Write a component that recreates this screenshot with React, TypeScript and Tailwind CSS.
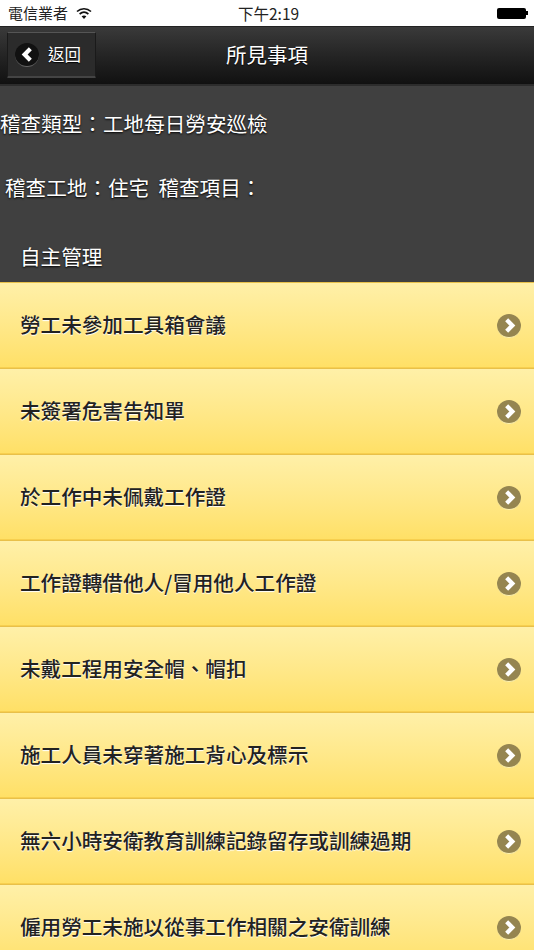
const font = { fontFamily: '"Noto Sans CJK TC", "Liberation Sans", sans-serif' };

const items = [
  "勞工未參加工具箱會議",
  "未簽署危害告知單",
  "於工作中未佩戴工作證",
  "工作證轉借他人/冒用他人工作證",
  "未戴工程用安全帽、帽扣",
  "施工人員未穿著施工背心及標示",
  "無六小時安衛教育訓練記錄留存或訓練過期",
  "僱用勞工未施以從事工作相關之安衛訓練",
];

function Chevron({ dir, size }: { dir: "left" | "right"; size: number }) {
  return (
    <svg width={size} height={size} viewBox="0 0 24 24" fill="none">
      <path
        d={dir === "left" ? "M16 4l-8 8 8 8" : "M8 4l8 8-8 8"}
        stroke="white"
        strokeWidth="6"
        strokeLinejoin="miter"
      />
    </svg>
  );
}

export default function App() {
  return (
    <div className="w-[534px] h-[950px] overflow-hidden flex flex-col bg-[#404040]" style={font}>
      <div className="h-[26px] shrink-0 bg-white flex items-center justify-between relative pl-2 pr-[6px] text-[15px] text-[#222]">
        <div className="flex items-center gap-[8px]">
          <span>電信業者</span>
          <svg width="16" height="12" viewBox="0 0 16 12" fill="none">
            <path d="M1 4.5C5 .8 11 .8 15 4.5" stroke="#111" strokeWidth="1.7" />
            <path d="M3.6 7C6.2 4.8 9.8 4.8 12.4 7" stroke="#111" strokeWidth="1.7" />
            <path d="M8 12l-2.4-2.7C7 8.2 9 8.2 10.4 9.3z" fill="#111" />
          </svg>
        </div>
        <span className="absolute left-[238px] top-0 leading-[26px] text-[15.5px]">下午2:19</span>
        <div className="flex items-center">
          <div className="w-[29px] h-[11px] bg-black rounded-[2px]" />
          <div className="w-[2px] h-[4px] bg-black" />
        </div>
      </div>

      <div className="h-[60px] shrink-0 bg-gradient-to-b from-[#3a3a3a] to-[#111] border-t border-[#222] border-b-2 border-b-[#2c2c2c] flex items-center relative">
        <div className="ml-[7px] mt-[-2px] w-[89px] h-[46px] bg-[#2b2b2b] border border-[#1a1a1a] border-t-[#555] border-b-2 border-b-[#444] flex items-center pl-[7px] gap-[9px] rounded-[1px]">
          <div className="w-[24px] h-[24px] mt-[1px] rounded-full bg-[#111] border-b border-[#666] flex items-center justify-center">
            <Chevron dir="left" size={17} />
          </div>
          <span className="text-white text-[16.5px] [text-shadow:0_1px_1px_#000]">返回</span>
        </div>
        <span className="absolute left-[226px] top-[11px] text-white text-[20.5px] leading-[32px] [text-shadow:0_1px_1px_#000]">所見事項</span>
      </div>

      <div className="h-[196px] shrink-0 bg-[#404040] text-white text-[20.6px] flex flex-col [text-shadow:0_1px_2px_#000]">
        <div className="h-[30px] mt-[22px] leading-[30px]">稽查類型：工地每日勞安巡檢</div>
        <div className="h-[30px] mt-[34px] leading-[30px] pl-[5px] whitespace-pre">稽查工地：住宅  稽查項目：</div>
        <div className="h-[30px] mt-[39px] leading-[30px] pl-[20px]">自主管理</div>
      </div>

      <div className="flex flex-col">
        {items.map((t) => (
          <div
            key={t}
            className="h-[86px] shrink-0 bg-gradient-to-b from-[#fff0a8] to-[#ffe066] border-t border-[#e8c04a] border-b border-b-[#f7cf4f] flex items-center justify-between pl-[20px] pr-[13px]"
          >
            <span className="text-[20.6px] text-[#222] font-medium [text-shadow:0_1px_1px_#fff] mt-[-1px]">{t}</span>
            <div className="w-[24px] h-[24px] mt-[2px] rounded-full bg-[#958550] border-b border-[#fff3b0] flex items-center justify-center">
              <Chevron dir="right" size={17} />
            </div>
          </div>
        ))}
      </div>
    </div>
  );
}
